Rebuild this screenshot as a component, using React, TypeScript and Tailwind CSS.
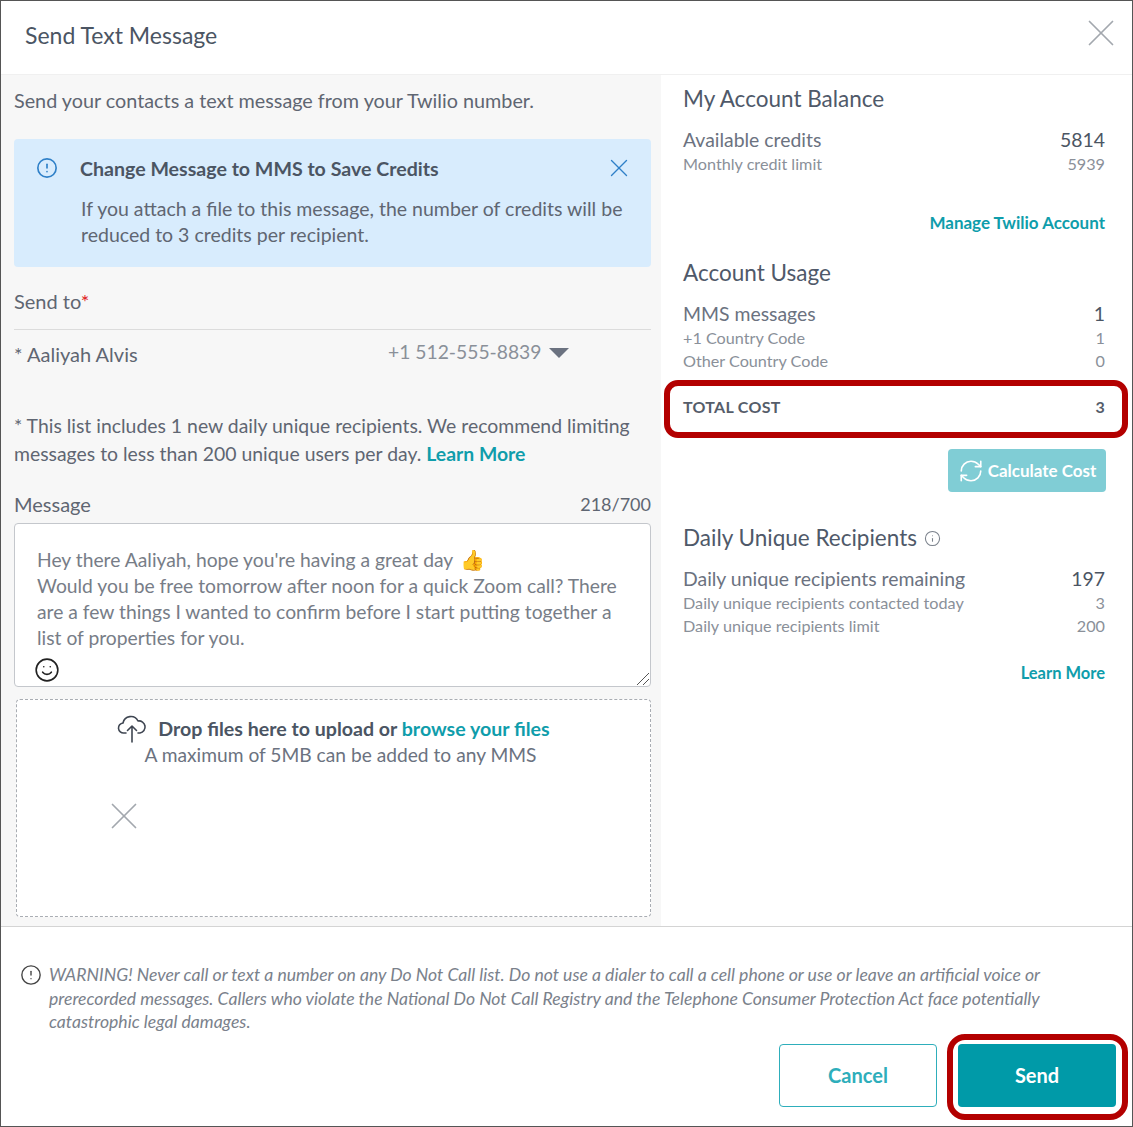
import { Info, RefreshCw, Smile, X } from "lucide-react";

const font = "font-['Lato',sans-serif]";

const Row = ({ label, value, small }: { label: string; value: string; small?: boolean }) => (
  <div className={small ? "flex justify-between text-[16.2px] leading-[23px] text-[#8a9099]" : "flex justify-between text-[19.4px] leading-[24px] text-[#6b7280]"}>
    <span>{label}</span>
    <span className={small ? "" : "text-[#4b5563]"}>{value}</span>
  </div>
);

const Heading = ({ children }: { children: React.ReactNode }) => (
  <h2 className="text-[22.5px] leading-[30px] text-[#4f5969]">{children}</h2>
);

const CloudUpload = () => (
  <svg width="30" height="30" viewBox="0 0 30 30" fill="none" stroke="#3f4652" strokeWidth="1.6" strokeLinecap="round" strokeLinejoin="round">
    <path d="M9 19H7a5 5 0 0 1-1-10 8 8 0 0 1 15-2 6 6 0 0 1 2 12h-2" />
    <path d="M15 28V12M10.5 16.5 15 12l4.5 4.5" />
  </svg>
);

export default function App() {
  return (
    <div className={`relative flex h-[1127px] w-[1133px] flex-col border border-[#555] bg-white ${font}`}>
      <header className="flex h-[73px] shrink-0 items-center justify-between pl-6 pr-[8px]">
        <h1 className="mb-[4px] text-[23px] text-[#4b5563]">Send Text Message</h1>
        <X className="mb-[10px] text-[#a3a8ae]" size={46} strokeWidth={0.9} />
      </header>

      <div className="flex h-[853px] shrink-0 border-y border-t-[#f0f0f0] border-b-[#d4d4d4]">
        <section className="w-[660px] shrink-0 bg-[#f7f7f7] pl-[13px] pr-[10px] pt-[11px]">
          <p className="text-[19.8px] leading-[28px] text-[#5f6672]">Send your contacts a text message from your Twilio number.</p>

          <div className="mt-[25px] h-[128px] rounded bg-[#d8ecfd] pl-[22px] pr-5 pt-[17px]">
            <div className="flex items-center">
              <Info className="mb-[2px] rotate-180 text-[#2f80c8]" size={22} strokeWidth={1.8} />
              <strong className="ml-[22px] flex-1 text-[19.6px] font-bold leading-[26px] text-[#4b5563]">Change Message to MMS to Save Credits</strong>
              <X className="-mx-[3px] -mt-[3px] -mb-px text-[#2f80c8]" size={30} strokeWidth={1.1} />
            </div>
            <p className="ml-[45px] mt-[14px] text-[19.5px] leading-[26px] text-[#5f6672]">
              If you attach a file to this message, the number of credits will be reduced to 3 credits per recipient.
            </p>
          </div>

          <div className="mt-[20px] border-b border-[#dcdcdc] pb-[14px] text-[20px] leading-[28px] text-[#5f6672]">
            Send to<span className="text-[#e02020]">*</span>
          </div>
          <div className="mt-[10px] flex h-[28px] items-center text-[20px] leading-[28px] text-[#5f6672]">
            <span className="w-[374px]">* Aaliyah Alvis</span>
            <span className="mb-[4px] text-[19.3px] text-[#8a9099]">+1 512-555-8839</span>
            <span className="mb-[2px] ml-[8px] h-0 w-0 border-x-[10px] border-t-[10px] border-x-transparent border-t-[#6b7280]" />
          </div>

          <p className="mt-[44px] text-[19.4px] leading-[28px] text-[#5f6672]">
            * This list includes 1 new daily unique recipients. We recommend limiting messages to less than 200 unique users per day.{" "}
            <a className="font-bold text-[#0f9dab]">Learn More</a>
          </p>

          <div className="mt-[22px] flex items-center justify-between text-[20px] leading-[28px] text-[#5f6672]">
            <span>Message</span>
            <span className="text-[18px]">218/700</span>
          </div>

          <div className="relative mt-[5px] h-[164px] rounded border border-[#c4c7cc] bg-white pl-[22px] pr-[20px] pt-[23px] text-[19.3px] leading-[26px] text-[#777d87]">
            <p>
              Hey there Aaliyah, hope you're having a great day <span className="ml-[2px] text-[20px] leading-none text-[#f2a900]">👍</span>
              <br />
              Would you be free tomorrow after noon for a quick Zoom call? There are a few things I wanted to confirm before I start putting together a list of properties for you.
            </p>
            <Smile className="-ml-[3px] mt-[6px] text-[#222]" size={26} strokeWidth={1.5} />
            <svg className="absolute bottom-0 right-0" width="14" height="14" viewBox="0 0 14 14" stroke="#555" strokeWidth="1">
              <path d="M1 13 13 1M7 13l6-6" />
            </svg>
          </div>

          <div className="ml-[2px] mt-[12px] h-[218px] rounded border border-dashed border-[#a9adb3] bg-white pt-[14px] text-center leading-[26px]">
            <div className="flex items-center justify-center gap-[11px] text-[19.6px]">
              <CloudUpload />
              <span className="font-bold text-[#4b5563]">
                Drop files here to upload or <a className="text-[#0f9dab]">browse your files</a>
              </span>
            </div>
            <p className="-mt-[2px] pl-[14px] text-[19.2px] text-[#6b7280]">A maximum of 5MB can be added to any MMS</p>
            <X className="ml-[84px] mt-[25px] text-[#a3a8ae]" size={46} strokeWidth={0.9} />
          </div>
        </section>

        <aside className="flex-1 pl-[22px] pr-[27px] pt-[9px]">
          <Heading>My Account Balance</Heading>
          <div className="mt-[14px]">
            <Row label="Available credits" value="5814" />
            <Row label="Monthly credit limit" value="5939" small />
          </div>
          <a className="mt-[36px] block text-right text-[17px] font-bold leading-[24px] text-[#0f9dab]">Manage Twilio Account</a>

          <div className="mt-[23px]"><Heading>Account Usage</Heading></div>
          <div className="mt-[14px]">
            <Row label="MMS messages" value="1" />
            <Row label="+1 Country Code" value="1" small />
            <Row label="Other Country Code" value="0" small />
          </div>
          <div className="mt-[23px] flex justify-between text-[16px] font-bold leading-[24px] tracking-[0.3px] text-[#555d6a]">
            <span>TOTAL COST</span>
            <span>3</span>
          </div>

          <div className="-mr-px mt-[30px] flex justify-end">
            <button className="flex h-[43px] w-[158px] items-center justify-center gap-[4px] rounded bg-[#80cdd5] text-[17px] font-bold text-white">
              <RefreshCw size={26} strokeWidth={1.5} />
              Calculate Cost
            </button>
          </div>

          <div className="mt-[31px] flex items-center gap-[7px]">
            <Heading>Daily Unique Recipients</Heading>
            <Info className="text-[#7a818b]" size={17} strokeWidth={1.5} />
          </div>
          <div className="mt-[14px]">
            <Row label="Daily unique recipients remaining" value="197" />
            <Row label="Daily unique recipients contacted today" value="3" small />
            <Row label="Daily unique recipients limit" value="200" small />
          </div>
          <a className="mt-[24px] block text-right text-[16.5px] font-bold leading-[24px] text-[#0f9dab]">Learn More</a>
        </aside>
      </div>

      <footer className="flex-1 pl-[19px] pr-[16px] pt-[36px]">
        <div className="flex gap-[7px]">
          <Info className="mt-[1px] shrink-0 rotate-180 text-[#444]" size={22} strokeWidth={1.5} />
          <p className="pr-[70px] text-[17.6px] italic leading-[23.5px] text-[#7a818b]">
            WARNING! Never call or text a number on any Do Not Call list. Do not use a dialer to call a cell phone or use or leave an artificial voice or prerecorded messages. Callers who violate the National Do Not Call Registry and the Telephone Consumer Protection Act face potentially catastrophic legal damages.
          </p>
        </div>
        <div className="mt-[10px] flex justify-end gap-[21px]">
          <button className="h-[63px] w-[158px] rounded border border-[#2eaebb] text-[20px] font-bold text-[#2eaebb]">Cancel</button>
          <button className="h-[63px] w-[158px] rounded bg-[#009aa8] text-[20px] font-bold text-white">Send</button>
        </div>
      </footer>

      <div className="absolute left-[663px] top-[379px] h-[58px] w-[464px] rounded-[14px] border-[6px] border-[#b30000]" />
      <div className="absolute left-[946px] top-[1033px] h-[86px] w-[181px] rounded-[18px] border-[6px] border-[#b30000]" />
    </div>
  );
}
